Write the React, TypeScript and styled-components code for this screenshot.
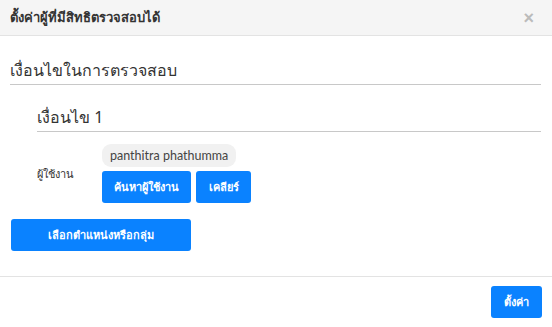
import React from "react";
import styled, { createGlobalStyle } from "styled-components";

const GlobalStyle = createGlobalStyle`
  html, body {
    margin: 0;
    padding: 0;
    background: #fff;
  }
  body {
    font-family: "Noto Sans", "Liberation Sans", sans-serif;
    color: #333;
  }
`;

const Modal = styled.div`
  width: 552px;
  height: 327px;
  display: flex;
  flex-direction: column;
  box-sizing: border-box;
  background: #fff;
`;

const Header = styled.div`
  height: 36px;
  box-sizing: border-box;
  background: #f5f5f5;
  border-bottom: 1px solid #e3e3e3;
  display: flex;
  align-items: center;
  justify-content: space-between;
  padding: 0 18px 0 10px;
`;

const Title = styled.h4`
  margin: 0;
  font-size: 13px;
  font-weight: 700;
  color: #333;
`;

const Close = styled.button`
  border: none;
  background: none;
  padding: 0;
  font-size: 18px;
  line-height: 1;
  color: #bbb;
  font-weight: 700;
  cursor: pointer;
`;

const Body = styled.div`
  flex: 1;
  padding: 23px 11px 0 10px;
`;

const SectionTitle = styled.div`
  font-size: 16px;
  line-height: 22px;
  padding-bottom: 3px;
  border-bottom: 1px solid #c8c8c8;
  color: #333;
`;

const Condition = styled.div`
  margin-top: 21px;
  padding-left: 27px;
`;

const ConditionTitle = styled.div`
  font-size: 16px;
  line-height: 22px;
  padding-bottom: 3px;
  border-bottom: 1px solid #c8c8c8;
  color: #333;
`;

const FieldRow = styled.div`
  display: grid;
  grid-template-columns: 65px auto;
  align-items: center;
  margin-top: 12px;
`;

const Label = styled.div`
  font-size: 11px;
  color: #333;
`;

const FieldContent = styled.div`
  display: flex;
  flex-direction: column;
  align-items: flex-start;
  gap: 4px;
`;

const Chip = styled.span`
  display: inline-flex;
  align-items: center;
  height: 23px;
  padding: 0 8px;
  border-radius: 9px;
  background: #f1f1f1;
  font-family: Lato, "Noto Sans", sans-serif;
  font-size: 12.5px;
  color: #444;
`;

const ButtonRow = styled.div`
  display: flex;
  gap: 5px;
`;

const Button = styled.button<{ $w?: number }>`
  height: 32px;
  width: ${({ $w }) => ($w ? `${$w}px` : "auto")};
  padding: 0 12px;
  border: none;
  border-radius: 3px;
  background: #0a82ff;
  color: #fff;
  font-family: inherit;
  font-size: 11px;
  font-weight: 700;
  cursor: pointer;
`;

const SelectRow = styled.div`
  margin-top: 16px;
  padding-left: 1px;
`;

const Footer = styled.div`
  border-top: 1px solid #e3e3e3;
  height: 51px;
  box-sizing: border-box;
  display: flex;
  justify-content: flex-end;
  align-items: center;
  padding: 0 10px;
`;

export default function App() {
  return (
    <>
      <GlobalStyle />
      <Modal>
        <Header>
          <Title>ตั้งค่าผู้ที่มีสิทธิตรวจสอบได้</Title>
          <Close aria-label="close">×</Close>
        </Header>
        <Body>
          <SectionTitle>เงื่อนไขในการตรวจสอบ</SectionTitle>
          <Condition>
            <ConditionTitle>เงื่อนไข 1</ConditionTitle>
            <FieldRow>
              <Label>ผู้ใช้งาน</Label>
              <FieldContent>
                <Chip>panthitra phathumma</Chip>
                <ButtonRow>
                  <Button $w={89}>ค้นหาผู้ใช้งาน</Button>
                  <Button $w={55}>เคลียร์</Button>
                </ButtonRow>
              </FieldContent>
            </FieldRow>
          </Condition>
          <SelectRow>
            <Button $w={180}>เลือกตำแหน่งหรือกลุ่ม</Button>
          </SelectRow>
        </Body>
        <Footer>
          <Button $w={51}>ตั้งค่า</Button>
        </Footer>
      </Modal>
    </>
  );
}
